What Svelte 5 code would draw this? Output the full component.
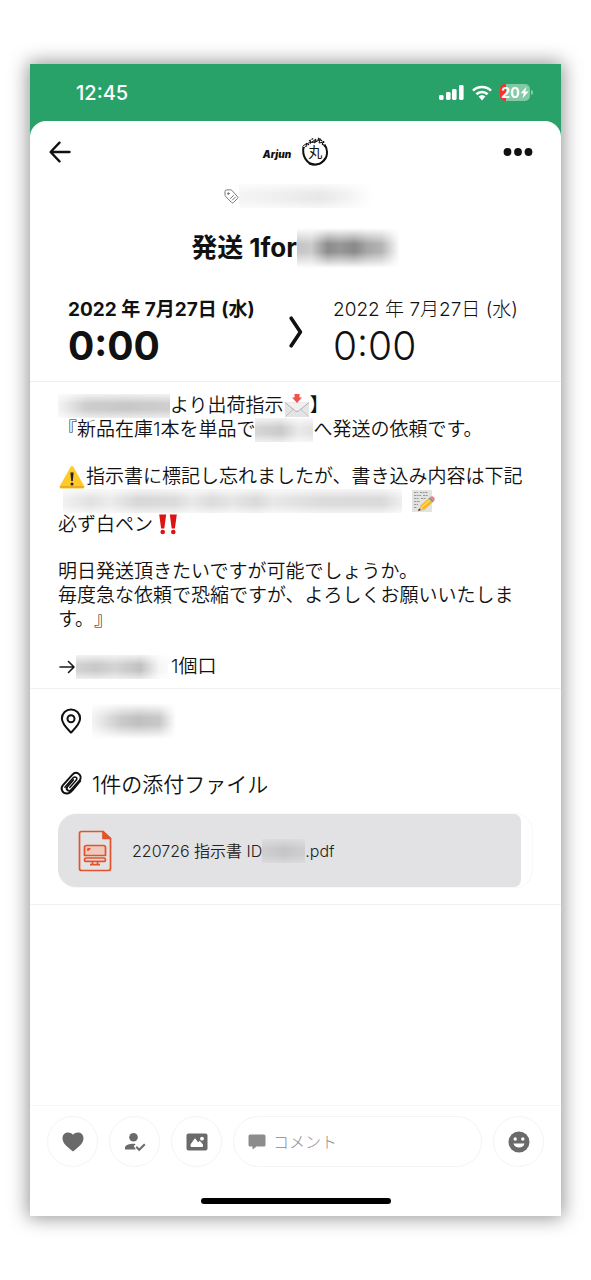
<script>
  let comment = $state('');
  const bars = [
    { x: 0, y: 10, h: 5 },
    { x: 7, y: 7, h: 8 },
    { x: 13, y: 4, h: 11 },
    { x: 20, y: 0, h: 15 }
  ];
</script>

<main class="phone">
  <header class="status">
    <span class="clock">12:45</span>
    <span class="indicators">
      <svg width="25" height="15" viewBox="0 0 25 15" fill="#fff" aria-hidden="true">
        {#each bars as b}
          <rect x={b.x} y={b.y} width="4.6" height={b.h} rx="1.4" />
        {/each}
      </svg>
      <svg width="20" height="16" viewBox="0 0 20 16" aria-hidden="true">
        <g fill="none" stroke="#fff" stroke-width="2.7">
          <path d="M1 5.6a13 13 0 0 1 18 0" />
          <path d="M4.4 9.3a8 8 0 0 1 11.2 0" />
        </g>
        <path d="M6.6 11.6a5 5 0 0 1 6.8 0L10 15.4z" fill="#fff" />
      </svg>
      <span class="battery">
        <span class="level">20<svg width="9" height="13" viewBox="0 0 9 13" aria-hidden="true"><path d="M6.6 0.6 0.6 7.2h3.2L2.4 12.4 8.6 5.6H5.2z" fill="#fff" /></svg></span>
        <span class="nub"></span>
      </span>
    </span>
  </header>

  <section class="sheet">
    <nav class="topbar">
      <button class="plain" aria-label="戻る">
        <svg width="22" height="22" viewBox="0 0 22 22" fill="none" stroke="#111" stroke-width="2.3" stroke-linecap="round" stroke-linejoin="round">
          <path d="M10.5 1.6 1.6 11l8.9 9.4M1.8 11H20.6" />
        </svg>
      </button>
      <div class="members">
        <span class="arjun">Arjun</span>
        <span class="seal">
          <svg width="28" height="30" viewBox="0 0 28 30" fill="none" stroke="#111" aria-hidden="true">
            <path d="M2.500 10C.8 19 6 27.500 14 27.500c7.500 0 12.400-6 12-13-.2-3-1-5-2.500-7" stroke-width="2" />
            <path d="M8 26.500c6 3 13 .5 16-5.500" stroke-width="1.500" />
            <path d="M1.500 9.500 6 6l-1 2 5-4-1 2.500 6-4.500-2 4 6-3.500-1 3.500 5-1-2 2 4 3" stroke-width="1" />
            <path d="M2 11.500 8 7M8 4l5-3M11 5.500 20 2M17 1l7 5M21 6.500l5 5" stroke-width="1.300" stroke-dasharray="2 .9" />
          </svg>
          <span>丸</span>
        </span>
      </div>
      <button class="plain" aria-label="メニュー">
        <svg width="30" height="10" viewBox="0 0 30 10" fill="#111">
          <circle cx="4.500" cy="5" r="3.900" /><circle cx="15" cy="5" r="3.900" /><circle cx="25.500" cy="5" r="3.900" />
        </svg>
      </button>
    </nav>

    <div class="label">
      <svg width="15" height="15" viewBox="0 0 15 15" fill="none" stroke="#777" stroke-linecap="round" stroke-linejoin="round" aria-hidden="true">
        <path d="M1 2.300Q1 1 2.300 1L6.500.8q.8 0 1.300.5l5.800 6.400q.8.9 0 1.700L9.400 13.600q-.9.8-1.700 0L1.400 7.200Q1 6.800 1 6.200z" />
        <path d="M6.500 9.500l3-3M8.500 11l3-3" />
        <circle cx="4.300" cy="4.600" r=".8" fill="#777" />
      </svg>
      <span class="veil veil-label"></span>
    </div>

    <h1>発送 1for<span class="veil veil-title"></span></h1>

    <div class="period">
      <div class="moment start">
        <span class="date">2022 年 7月27日 (水)</span>
        <time>0:00</time>
      </div>
      <svg width="14" height="32" viewBox="0 0 14 32" fill="none" stroke="#111" stroke-width="3.600" stroke-linecap="round" stroke-linejoin="round" aria-hidden="true">
        <path d="M2.200 2.200 11.400 16 2.200 29.800" />
      </svg>
      <div class="moment">
        <span class="date">2022 年 7月27日 (水)</span>
        <time>0:00</time>
      </div>
    </div>

    <article class="note">
      <p>
        <span class="veil veil-sender"></span>より出荷指示<svg class="emoji" width="26" height="24" viewBox="0 0 26 24" role="img" aria-label="メール">
          <rect x="1" y="8" width="24" height="15" rx="1" fill="#e4e4e5" />
          <path d="M1.500 22.500 10 14.500M24.500 22.500 16 14.500" stroke="#c3c3c5" fill="none" />
          <path d="M1 8.500 11.500 17q1.500 1 3 0L25 8.500" fill="#f0f0f1" stroke="#b0b0b2" />
          <path d="M10.500 0h5v3.500H18L13 9 8 3.500h2.500z" fill="#ef5350" />
        </svg>】<br />
        『新品在庫1本を単品で<span class="veil veil-place"></span>へ発送の依頼です。
      </p>
      <p>
        <svg class="emoji" width="28" height="24" viewBox="0 0 28 24" role="img" aria-label="注意">
          <path d="M14 2.500 25 22H3z" fill="#fdc92b" stroke="#fdc92b" stroke-width="3" stroke-linejoin="round" />
          <path d="M3 22h22" stroke="#e9ad22" stroke-width="2" stroke-linecap="round" />
          <path d="M12.400 7.500h3.200L14.800 16h-1.600z" fill="#222" />
          <circle cx="14" cy="19" r="1.500" fill="#222" />
        </svg>指示書に標記し忘れましたが、書き込み内容は下記<br />
        <span class="veil veil-line"></span><svg class="emoji" width="24" height="24" viewBox="0 0 24 24" role="img" aria-label="メモ">
          <path d="M1 1h20v22H1z" fill="#e3e3e2" />
          <path d="M3 3.500h4M9 3.500h8M3 6.500h7M12 6.500h5M3 9.500h5M10 9.500h5M3 12.500h6M3 15.500h4M3 18.500h3" stroke="#969696" stroke-dasharray="2 .6" />
          <path d="M7 22l2-5 4.500 4z" fill="#e5c597" />
          <path d="M7 22l1-2.500 2 1.500z" fill="#333" />
          <path d="M9 17 17.500 9.500l4 4L13 21z" fill="#f6b721" />
          <path d="M10.500 18.500 19 11" stroke="#ffdc59" stroke-width="1.500" />
          <path d="M17.500 9.500l1.600-1.400 4 4-1.600 1.400z" fill="#8b9693" />
          <path d="M19.100 8.100c2.500-2.500 6 1.500 4 4z" fill="#f0788c" />
        </svg><br />
        必ず白ペン<svg class="emoji bang" width="20" height="22" viewBox="0 0 20 22" fill="#dc1414" role="img" aria-label="重要">
          <path d="M1.200 1.500h7L6.300 15.500H3.100zM11.800 1.500h7L16.900 15.500H13.700z" />
          <circle cx="4.700" cy="19" r="2.300" /><circle cx="15.300" cy="19" r="2.300" />
        </svg>
      </p>
      <p>
        明日発送頂きたいですが可能でしょうか。<br />
        毎度急な依頼で恐縮ですが、よろしくお願いいたします。』
      </p>
      <p>
        <svg class="arrow" width="18" height="14" viewBox="0 0 18 14" fill="none" stroke="#1a1a1a" stroke-width="1.600" stroke-linecap="round" stroke-linejoin="round" role="img" aria-label="→">
          <path d="M2 7h14M10.500 1.500 16 7l-5.500 5.500" />
        </svg><span class="veil veil-item"></span>1個口
      </p>
    </article>

    <section class="details">
      <div class="row">
        <svg width="26" height="26" viewBox="0 0 26 26" fill="none" stroke="#111" stroke-width="2" aria-hidden="true">
          <path d="M13 24.600C8.500 20 3.900 15.700 3.900 10.500a9.100 9.100 0 0 1 18.200 0C22.100 15.700 17.500 20 13 24.600z" stroke-linejoin="round" />
          <circle cx="13" cy="10.800" r="3.500" />
        </svg>
        <span class="veil veil-location"></span>
      </div>
      <h2 class="row">
        <svg width="26" height="26" viewBox="0 0 26 26" fill="none" stroke="#111" stroke-width="1.900" stroke-linecap="round" stroke-linejoin="round" aria-hidden="true">
          <path d="M22.300 11 14.600 20.200c-1.500 1.800-3.200 3.300-5.600 3.300-4.500.1-7-4.600-4.200-8.200L14.200 4.800c4.200-4.600 11.200.6 7.400 5.600L13.400 19.600c-2.700 2.900-6.200-.1-4-2.900l5.800-6.700" />
          <path d="M6.900 17.200 15 7.900c2.300-2.200 4.900.1 3.300 2.200l-6.500 7.300" stroke-width="1.500" />
        </svg>
        1件の添付ファイル
      </h2>
      <div class="attachments">
        <a class="file" href="#file">
          <svg width="34" height="42" viewBox="0 0 34 42" fill="none" stroke="#e2532b" stroke-width="1.700" stroke-linejoin="round" aria-hidden="true">
            <path d="M25 1.500H3.500q-2 0-2 2v35q0 2 2 2h27q2 0 2-2V8.500z" />
            <path d="M25 1.500v7h7.500z" fill="#e2532b" />
            <path d="M6.500 25.500V17.500q0-2 2-2h17q2 0 2 2v8z" fill="#f0c9be" />
            <rect x="6.500" y="28" width="21" height="3.400" rx="1.700" />
            <path d="M14.500 31.500v3h5v-3M12 34.700h10M10 21v-2.200h2.500" />
          </svg>
          <span class="name">220726 指示書 ID<span class="veil veil-id"></span>.pdf</span>
        </a>
      </div>
    </section>

    <footer>
      <div class="actions">
        <button class="round" aria-label="いいね">
          <svg width="24" height="22" viewBox="0 0 24 22" fill="#6a6a6a"><path d="M12 20.500C6 15.500 1.500 12.300 1.500 7.200 1.500 1.200 8.500-.3 12 3.700 15.500-.3 22.500 1.200 22.500 7.200 22.500 12.300 18 15.500 12 20.500z" /></svg>
        </button>
        <button class="round" aria-label="参加者">
          <svg width="22" height="20" viewBox="0 0 22 20" fill="#6a6a6a">
            <circle cx="9.500" cy="5.300" r="4.300" />
            <path d="M1 17.500v-1.800c0-2.700 4.500-4 8.500-4q1.300 0 2.300.2L9.800 14l2 3.500z" />
            <path d="M12.200 14.800l3 3 5.600-5.600" fill="none" stroke="#6a6a6a" stroke-width="2" />
          </svg>
        </button>
        <button class="round" aria-label="写真">
          <svg width="22" height="18" viewBox="0 0 22 18">
            <rect x=".5" y=".5" width="21" height="17" rx="2" fill="#6a6a6a" />
            <path d="M5 13.500V11.500L9 5.800l3 4 1.800-1.500 2.700 3.200v2z" fill="#fff" stroke="#fff" stroke-linejoin="round" />
            <circle cx="16" cy="5.700" r="1.900" fill="#fff" />
          </svg>
        </button>
        <label class="comment">
          <svg width="18" height="16" viewBox="0 0 18 16" fill="#8c8c8c" aria-hidden="true"><path d="M2 .5h14q1.500 0 1.500 1.500v9q0 1.500-1.500 1.500H8.500L4.500 15.500v-3H2Q.5 12.500.5 11V2Q.5.500 2 .5z" /></svg>
          <input type="text" placeholder="コメント" aria-label="コメント" bind:value={comment} />
        </label>
        <button class="round" aria-label="スタンプ">
          <svg width="22" height="22" viewBox="0 0 22 22">
            <circle cx="11" cy="11" r="10.500" fill="#6a6a6a" />
            <circle cx="7.200" cy="8" r="1.700" fill="#fff" /><circle cx="14.800" cy="8" r="1.700" fill="#fff" />
            <path d="M5.500 12.500h11c-.8 5.400-10.200 5.400-11 0z" fill="#fff" />
          </svg>
        </button>
      </div>
      <div class="home"></div>
    </footer>
  </section>
</main>

<style>
  :global(body) {
    background: #fff;
  }
  .phone {
    box-sizing: border-box;
    display: flex;
    flex-direction: column;
    min-height: calc(100vh - 128px);
    margin: 64px 30px;
    background: #28a268;
    color: #111;
    font-family: Inter, "Noto Sans CJK JP", sans-serif;
    box-shadow: 0 0 18px 2px rgba(0, 0, 0, 0.42);
  }
  .status {
    display: flex;
    align-items: center;
    justify-content: space-between;
    height: 57px;
    padding: 0 28px 0 46px;
    color: #fff;
  }
  .clock {
    font-size: 20px;
    font-weight: 500;
  }
  .indicators,
  .battery,
  .level {
    display: flex;
    align-items: center;
  }
  .indicators {
    gap: 8px;
  }
  .battery {
    gap: 1px;
  }
  .level {
    justify-content: center;
    width: 30px;
    height: 17px;
    border-radius: 5px;
    background: linear-gradient(90deg, #ff3126 6px, #82c9a6 6px);
    font-size: 14px;
    font-weight: 700;
  }
  .nub {
    width: 2px;
    height: 5px;
    border-radius: 0 2px 2px 0;
    background: #82c9a6;
  }
  .sheet {
    display: flex;
    flex: 1;
    flex-direction: column;
    border-radius: 16px 16px 0 0;
    background: #fff;
  }
  .topbar {
    display: grid;
    grid-template-columns: 40px 1fr 32px;
    align-items: center;
    height: 62px;
    padding: 0 26px 0 19px;
  }
  button {
    display: flex;
    align-items: center;
    justify-content: center;
    padding: 0;
    border: 0;
    background: none;
  }
  .plain {
    justify-content: flex-start;
    height: 44px;
  }
  .members {
    display: flex;
    align-items: center;
    justify-content: center;
    gap: 10px;
  }
  .arjun {
    padding-top: 4px;
    font-size: 10px;
    font-style: italic;
    font-weight: 900;
    line-height: 12px;
  }
  .seal {
    display: grid;
    place-items: center;
    font-size: 14px;
    line-height: 30px;
  }
  .seal > * {
    grid-area: 1 / 1;
  }
  .label {
    display: flex;
    align-items: center;
    justify-content: center;
    height: 26px;
    padding-left: 6px;
  }
  .veil {
    display: inline-block;
    height: 24px;
    vertical-align: top;
    -webkit-mask-image: linear-gradient(rgba(0, 0, 0, 0.25), #000 40%, #000 65%, rgba(0, 0, 0, 0.35));
    mask-image: linear-gradient(rgba(0, 0, 0, 0.25), #000 40%, #000 65%, rgba(0, 0, 0, 0.35));
  }
  .veil-label {
    width: 134px;
    background: linear-gradient(90deg, #f4f4f4, #efefef 30%, #e8e8e8 60%, #f2f2f2 80%, #fff);
  }
  h1 {
    display: flex;
    align-items: center;
    justify-content: center;
    margin: 19px 0 0;
    font-size: 26px;
    font-weight: 700;
    line-height: 40px;
    white-space: pre;
  }
  .veil-title {
    width: 103px;
    height: 40px;
    background: linear-gradient(90deg, #c4c4c4, #cccccc 14%, #8c8c8c 30%, #979797 42%, #8a8a8a 56%, #a6a6a6 68%, #b4b4b4 82%, #fff);
    -webkit-mask-image: linear-gradient(transparent, #000 40%, #000 60%, transparent);
    mask-image: linear-gradient(transparent, #000 40%, #000 60%, transparent);
  }
  .period {
    display: grid;
    grid-template-columns: 221px 1fr 199px;
    align-items: center;
    padding: 28px 29px 13px 38px;
    border-bottom: 1px solid #efefef;
  }
  .moment {
    display: flex;
    flex-direction: column;
    font-weight: 300;
  }
  .date {
    font-size: 19px;
    line-height: 28px;
    white-space: nowrap;
  }
  time {
    font-size: 39px;
    line-height: 44px;
  }
  .start {
    font-weight: 700;
  }
  .note {
    padding: 12px 28px 9px;
    border-bottom: 1px solid #f2f2f2;
    font-size: 19px;
    font-weight: 350;
    line-height: 24px;
    text-spacing-trim: space-all;
  }
  .note p {
    margin: 0;
  }
  .note p + p {
    margin-top: 23px;
  }
  .emoji {
    vertical-align: top;
  }
  .bang {
    margin-left: 5px;
  }
  .arrow {
    vertical-align: -1px;
  }
  .veil-sender {
    width: 112px;
    background: linear-gradient(90deg, #f4f4f4, #cecece 25%, #c8c8c8 60%, #cfcfcf);
  }
  .veil-place {
    width: 58px;
    background: linear-gradient(90deg, #d6d6d6, #cbcbcb 45%, #e9e9e9 75%, #e2e2e2);
  }
  .veil-line {
    width: 339px;
    margin: 0 9px 0 5px;
    background: linear-gradient(90deg, #f1f1f1, #e2e2e2 8%, #ececec 14%, #d8d8d8 22%, #dcdcdc 33%, #e9e9e9 38%, #dcdcdc 44%, #e6e6e6 50%, #dadada 57%, #e8e8e8 62%, #dcdcdc 76%, #dadada 94%, #eee);
  }
  .veil-item {
    width: 92px;
    margin-right: 3px;
    background: linear-gradient(90deg, #d2d2d2, #c9c9c9 22%, #d4d4d4 42%, #c2c2c2 70%, #f5f5f5 90%, #fafafa);
  }
  .details {
    padding: 12px 28px 16px;
    border-bottom: 1px solid #f2f2f2;
  }
  .row {
    display: flex;
    align-items: center;
    gap: 8px;
    height: 40px;
    margin: 0;
    font-size: 21px;
    font-weight: 350;
  }
  .veil-location {
    width: 84px;
    height: 36px;
    background: linear-gradient(90deg, #f4f4f4, #cacaca 35%, #c0c0c0 55%, #c8c8c8 80%, #fff);
    -webkit-mask-image: linear-gradient(transparent, #000 40%, #000 60%, transparent);
    mask-image: linear-gradient(transparent, #000 40%, #000 60%, transparent);
  }
  h2.row {
    margin-top: 22px;
  }
  .attachments {
    margin-top: 10px;
    padding-right: 11px;
    border: 1px solid #f8f8f8;
    border-left: 0;
    border-radius: 18px;
  }
  .file {
    display: flex;
    align-items: center;
    gap: 20px;
    height: 73px;
    padding-left: 20px;
    border-radius: 18px 7px 7px 18px;
    background: #e2e2e4;
    color: #222;
    text-decoration: none;
  }
  .name {
    font-size: 16px;
    font-weight: 350;
    line-height: 24px;
  }
  .veil-id {
    width: 43px;
    background: linear-gradient(90deg, #cfcfd1, #c6c6c8 50%, #cfcfd1);
  }
  footer {
    margin-top: auto;
    border-top: 1px solid #f5f5f5;
  }
  .actions {
    display: flex;
    gap: 11px;
    padding: 10px 17px 0;
  }
  .round,
  .comment {
    box-sizing: border-box;
    height: 51px;
    border: 1px solid #f4f4f4;
    border-radius: 26px;
  }
  .round {
    flex: none;
    width: 51px;
  }
  .comment {
    display: flex;
    flex: 1;
    align-items: center;
    gap: 7px;
    min-width: 0;
    padding: 0 14px;
  }
  input {
    flex: 1;
    min-width: 0;
    padding: 0;
    border: 0;
    outline: 0;
    background: none;
    font: 300 16px/24px Inter, "Noto Sans CJK JP", sans-serif;
  }
  input::placeholder {
    color: #8c8c8c;
    opacity: 1;
  }
  .home {
    width: 190px;
    height: 6px;
    margin: 31px auto 12px;
    border-radius: 3px;
    background: #000;
  }
</style>
